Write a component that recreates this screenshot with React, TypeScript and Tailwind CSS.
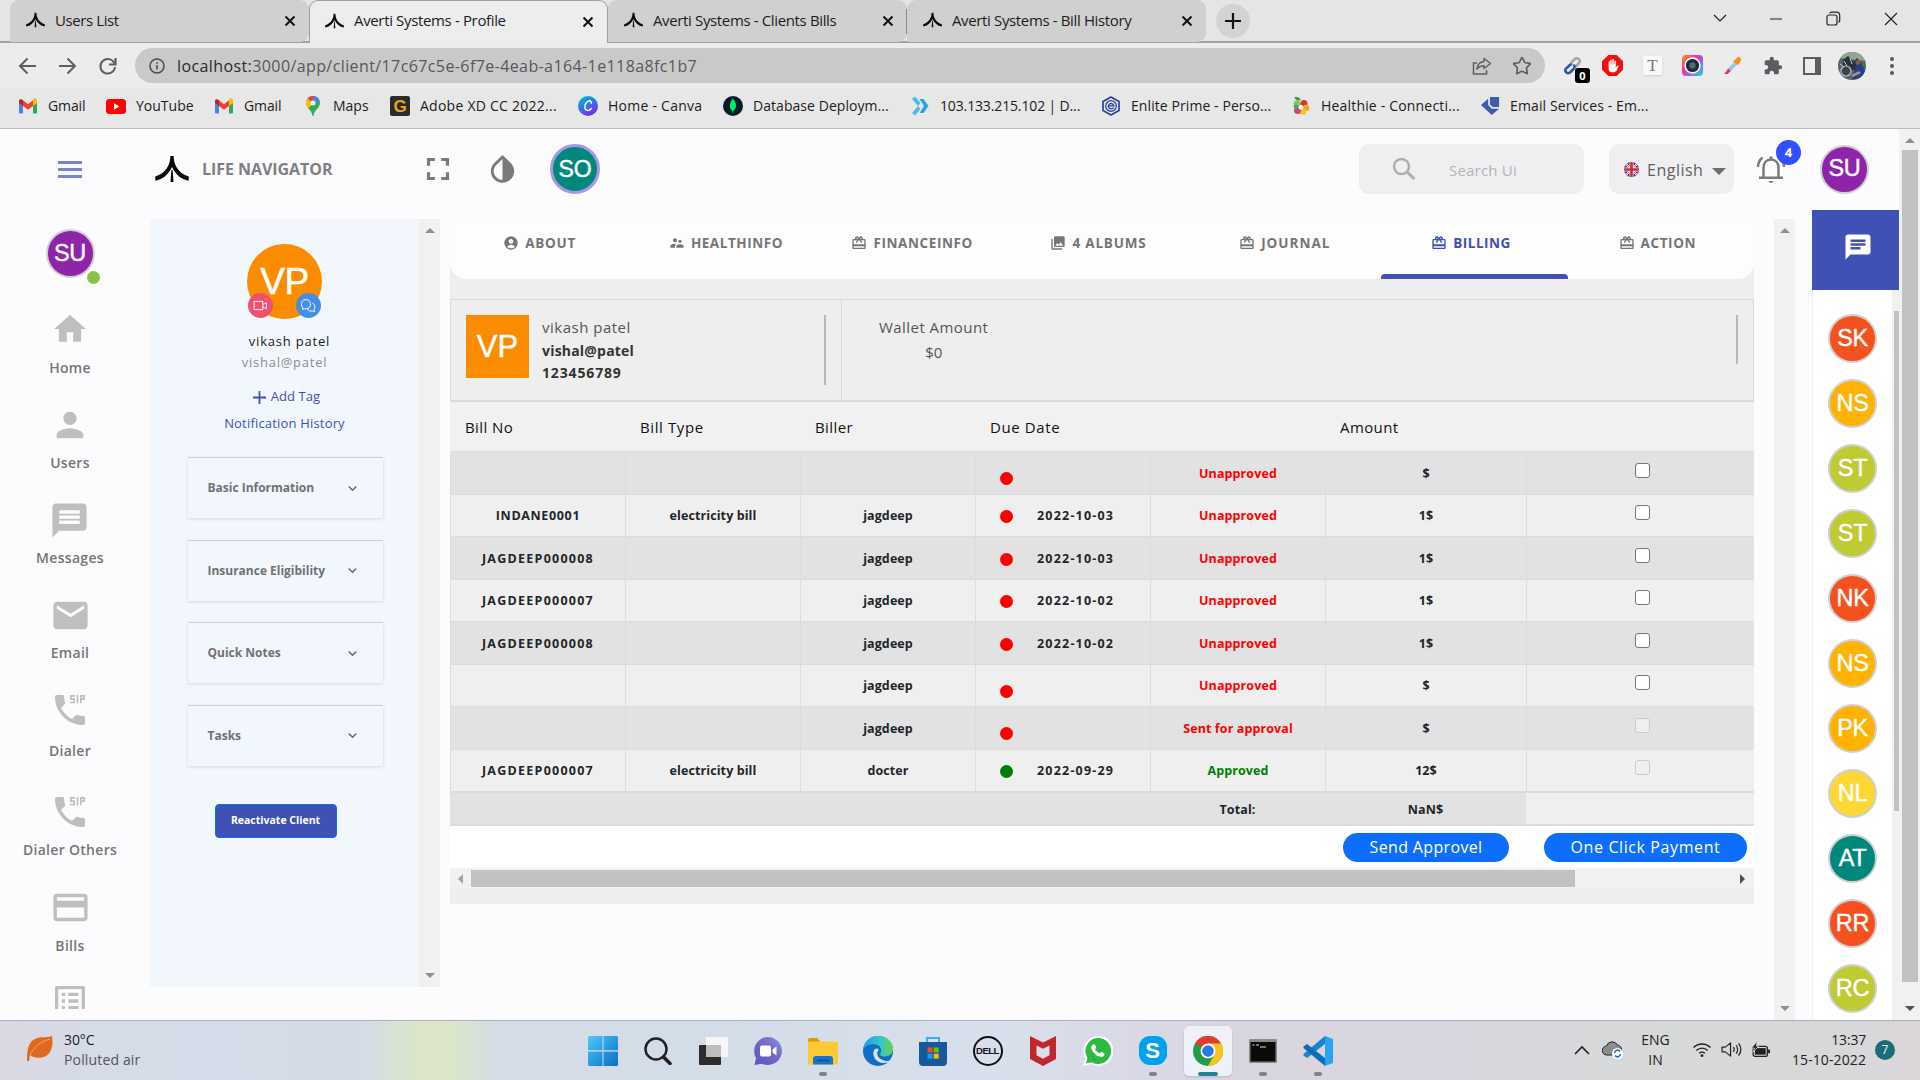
import React from "react";
import {
  MdHome,
  MdPerson,
  MdMessage,
  MdEmail,
  MdDialerSip,
  MdCreditCard,
  MdListAlt,
  MdFullscreen,
  MdInvertColors,
  MdAccountCircle,
  MdSupervisorAccount,
  MdCardGiftcard,
  MdPhotoLibrary,
  MdChat,
  MdExtension,
  MdExpandMore,
} from "react-icons/md";
import { Star } from "lucide-react";

const UI = "font-['Open_Sans',sans-serif]";

/* ---------- small drawings ---------- */

function AvertiMark({ className }: { className: string }) {
  return (
    <svg viewBox="0 0 34 26" className={className} fill="#0a0a0a">
      <path d="M15.4 0h3.2c.2 9 4.400 17 15.100 20.600v4.200C26 23.300 20.500 18.500 17 11 13.500 18.500 8 23.300.3 24.800v-4.200C11 17 15.200 9 15.400 0z" />
      <path d="M16.400 14h1.200l.9 12h-3z" />
    </svg>
  );
}

function Cross({ className }: { className: string }) {
  return (
    <svg viewBox="0 0 12 12" className={className} stroke="#111" strokeWidth="2" fill="none">
      <path d="M1.500 1.500l9 9M10.500 1.500l-9 9" />
    </svg>
  );
}

function GmailIcon() {
  return (
    <svg viewBox="0 0 20 16" className="h-4 w-5">
      <path d="M1 3v11.500c0 .6.500 1 1 1h3V7z" fill="#4285f4" />
      <path d="M19 3v11.500c0 .6-.5 1-1 1h-3V7z" fill="#34a853" />
      <path d="M15 2.300V8l4-3V2.500c0-1.900-2-2.800-3.300-1.700z" fill="#fbbc04" />
      <path d="M5 8V2.300l5 3.900 5-3.900V8l-5 3.800z" fill="#ea4335" />
      <path d="M1 2.500V5l4 3V2.300l-.7-.6C3 .6 1 1.300 1 2.500z" fill="#c5221f" />
    </svg>
  );
}

function YouTubeIcon() {
  return (
    <svg viewBox="0 0 20 15" className="h-[15px] w-5">
      <rect width="20" height="15" rx="3.500" fill="#f00" />
      <path d="M8 4.300v6.400l5.400-3.200z" fill="#fff" />
    </svg>
  );
}

function MapsIcon() {
  return (
    <svg viewBox="0 0 14 20" className="h-5 w-3.5">
      <path d="M7 0C3.100 0 0 3.100 0 7c0 5.200 5.700 6.500 6.400 12.400.1.800 1.100.8 1.200 0C8.300 13.500 14 12.200 14 7c0-3.900-3.100-7-7-7z" fill="#34a853" />
      <path d="M0 7c0 2.400 1 4 2.300 5.600L9 5 4.800 1.500 1.600 2.500A7 7 0 0 0 0 7z" fill="#fbbc04" />
      <path d="M1.600 2.500L5 5.400 9 .3A7 7 0 0 0 1.600 2.500z" fill="#ea4335" />
      <path d="M9 .3L5 5.200l4.200 3.600 4.300-4.400A7 7 0 0 0 9 .3z" fill="#4285f4" />
      <circle cx="7" cy="7" r="2.500" fill="#fff" />
    </svg>
  );
}

function CanvaIcon() {
  return (
    <svg viewBox="0 0 20 20" className="h-5 w-5">
      <defs>
        <linearGradient id="canva" x1="0" y1="0" x2=".6" y2="1">
          <stop offset="0" stopColor="#00c4cc" />
          <stop offset=".5" stopColor="#2a7be8" />
          <stop offset="1" stopColor="#7d2ae8" />
        </linearGradient>
      </defs>
      <circle cx="10" cy="10" r="10" fill="url(#canva)" />
      <path d="M13.300 7.200c.4-1.800-.9-2.700-2.500-2.200-2.600.8-4.300 4-4 6.700.3 2.900 3.800 4 6.600.8" fill="none" stroke="#fff" strokeWidth="1.500" strokeLinecap="round" />
    </svg>
  );
}

function MongoIcon() {
  return (
    <svg viewBox="0 0 20 20" className="h-5 w-5">
      <circle cx="10" cy="10" r="10" fill="#021e2b" />
      <path d="M10 2.500c4 4.500 4 9.500.3 12.500l-.1 2.500h-.5L9.500 15C6 12 6 7 10 2.500z" fill="#00ed64" />
    </svg>
  );
}

function ChevronsIcon() {
  return (
    <svg viewBox="0 0 18 20" className="h-5 w-[18px]">
      <path d="M1 3l3-2.500L9.500 7 7 10 1 3z" fill="#45bdee" />
      <path d="M1 17l3 2.500L9.500 13 7 10z" fill="#45bdee" />
      <path d="M8.500 3h4L17.500 10l-5 7h-4l4.500-7z" fill="#2aa2e6" />
    </svg>
  );
}

function EnliteIcon() {
  return (
    <svg viewBox="0 0 20 20" className="h-5 w-5" fill="none" stroke="#2d3e9f">
      <path d="M10 1l8 4.500v9L10 19l-8-4.500v-9z" strokeWidth="1.700" strokeLinejoin="round" />
      <circle cx="10" cy="10" r="5.300" strokeWidth="1.300" />
      <path d="M12.500 11.500a2.700 2.700 0 1 1 .3-1.700H8" strokeWidth="1.300" />
    </svg>
  );
}

function HealthieIcon() {
  return (
    <svg viewBox="0 0 18 20" className="h-5 w-[18px]">
      <path d="M9 4C7 0 3 1 2.500 1c.500 3 3 4.500 6.500 3z" fill="#3c9b3a" />
      <circle cx="5" cy="8" r="3.500" fill="#8cc63f" />
      <circle cx="12" cy="7.500" r="3.500" fill="#e5312b" />
      <circle cx="14" cy="12" r="3.300" fill="#f6a21c" />
      <circle cx="11" cy="15.500" r="3.300" fill="#f4c51d" />
      <circle cx="5.500" cy="14.500" r="3.500" fill="#e23e68" />
      <circle cx="4" cy="11" r="2.300" fill="#2fa98a" />
      <circle cx="9" cy="11.500" r="2.400" fill="#fff" />
    </svg>
  );
}

function EmailServiceIcon() {
  return (
    <svg viewBox="0 0 22 20" className="h-5 w-[22px]" fill="#3f5ba9">
      <path d="M11 0h10v11h-7l-3-3z" />
      <path d="M9 2v7l4 4h8l-8 7L1 9z" />
    </svg>
  );
}

function Flag() {
  return (
    <svg viewBox="0 0 15 15" className="h-[15px] w-[15px]">
      <defs>
        <clipPath id="flag">
          <circle cx="7.500" cy="7.500" r="7.500" />
        </clipPath>
      </defs>
      <g clipPath="url(#flag)">
        <rect width="15" height="15" fill="#29337a" />
        <path d="M0 0l15 15M15 0L0 15" stroke="#fff" strokeWidth="2.200" />
        <path d="M0 0l15 15M15 0L0 15" stroke="#d32f3f" strokeWidth=".8" />
        <path d="M7.500 0v15M0 7.500h15" stroke="#fff" strokeWidth="4" />
        <path d="M7.500 0v15M0 7.500h15" stroke="#d3253a" strokeWidth="2.600" />
      </g>
    </svg>
  );
}

function Tri({ dir, color = "#8f8f8f" }: { dir: "up" | "down" | "left" | "right"; color?: string }) {
  const d = {
    up: "M0 8L5 3l5 5z",
    down: "M0 2l5 5 5-5z",
    left: "M8 0L3 5l5 5z",
    right: "M2 0l5 5-5 5z",
  }[dir];
  return (
    <svg viewBox="0 0 10 10" className="h-2.5 w-2.5 shrink-0">
      <path d={d} fill={color} />
    </svg>
  );
}

/* ---------- browser chrome ---------- */

function Tab({ title, text, active, sep }: { title: string; text: string; active?: boolean; sep?: boolean }) {
  return (
    <div
      className={
        active
          ? "relative z-10 -mb-px flex h-[43px] w-[299px] shrink-0 items-center rounded-t-[9px] border border-b-0 border-[#9f9f9f] bg-[#ededed] pb-[3px] pl-[15px]"
          : "relative flex h-[42px] w-[299px] shrink-0 items-center rounded-t-[9px] rounded-br-[9px] bg-[#d0d0d0] pb-[2px] pl-4"
      }
    >
      <AvertiMark className="h-4 w-[19px]" />
      <span className={"ml-[10px] whitespace-nowrap text-[#1c1c1c] " + text}>{title}</span>
      <Cross className="absolute top-[15px] right-[13px] h-3 w-3" />
      {sep && <span className="absolute top-[9px] right-0 h-[25px] w-px bg-[#8a8a8a]" />}
    </div>
  );
}

function TabStrip() {
  return (
    <div className="flex h-[43px] items-start border-b-2 border-[#a2a2a2] bg-[#e5e5e5] pl-[10px] text-[15px]">
      <Tab title="Users List" text="tracking-[-0.4px]" />
      <Tab title="Averti Systems - Profile" text="tracking-[-0.35px]" active />
      <Tab title="Averti Systems - Clients Bills" text="tracking-[-0.36px]" sep />
      <Tab title="Averti Systems - Bill History" text="tracking-[-0.36px]" />
      <div className="mt-1 ml-[10px] flex h-[34px] w-[34px] items-center justify-center rounded-full bg-[#d3d3d3]">
        <svg viewBox="0 0 16 16" className="h-4 w-4" stroke="#111" strokeWidth="2.200">
          <path d="M8 0v16M0 8h16" />
        </svg>
      </div>
      <div className="mt-2 ml-auto flex items-center pr-[21px]">
        <svg viewBox="0 0 186 20" className="h-5 w-[186px]" fill="none" stroke="#222" strokeWidth="1.200">
          <path d="M1 7l6 6 6-6M57 11h12" />
          <rect x="114" y="7" width="10" height="10" rx="2" />
          <path d="M117 5.500c0-.8.700-1.300 1.500-1.300h5c2 0 3.200 1.200 3.200 3.200v5c0 1-.5 1.600-1.500 1.600" />
          <path d="M172 5l12 12M184 5l-12 12" />
        </svg>
      </div>
    </div>
  );
}

function Toolbar() {
  return (
    <div className="flex h-[45px] items-center bg-[#ececec]">
      <svg viewBox="0 0 120 20" className="h-5 w-[120px] shrink-0" fill="none" stroke="#5c5f63" strokeWidth="2">
        <path d="M36 10H20.500M27.500 2.500L20 10l7.500 7.500M59 10h15.500M67.500 2.500L75 10l-7.500 7.500" />
        <path d="M114.500 7.500A7.300 7.300 0 1 0 115 11" />
        <path d="M115.500 2v6.500H109" strokeWidth="2.200" />
      </svg>
      <div className="ml-[15px] flex h-[35px] w-[1410px] shrink-0 items-center rounded-full bg-[#c9c9c9] pr-[13px] pl-[14px]">
        <svg viewBox="0 0 16 16" className="h-4 w-4" fill="none" stroke="#4b4e52" strokeWidth="1.600">
          <circle cx="8" cy="8" r="7" />
          <path d="M8 7v4.500M8 4.200v1.600" />
        </svg>
        <span className="ml-[12px] text-[16px] tracking-[0.4px] whitespace-nowrap text-[#55585c]">
          <span className="text-[#2a2a2a]">localhost:</span>3000/app/client/17c67c5e-6f7e-4eab-a164-1e118a8fc1b7
        </span>
        <svg viewBox="0 0 20 18" className="ml-auto h-[18px] w-5" fill="none" stroke="#5c5f63" strokeWidth="1.500">
          <path d="M5 6H1.500v11h13v-4" />
          <path d="M12 1.500l6.500 5L12 11.500V8.700c-3.300 0-5.300 1-7 3.500.4-4.200 2.800-7.200 7-7.700z" strokeLinejoin="round" />
        </svg>
        <Star className="ml-[20px] h-5 w-5 text-[#5c5f63]" strokeWidth={2} />
      </div>
      <div className="ml-[18px] flex shrink-0 items-center">
        <div className="relative h-5 w-5">
          <svg viewBox="0 0 20 20" className="h-5 w-5" fill="none" strokeWidth="2.600" strokeLinecap="round">
            <path d="M8.500 8.500c-.5-1.500.2-2.500 1-3.200l2-2c3-2.700 7 1 4.200 4L13 10.500" stroke="#a6a8ab" />
            <path d="M7.500 8.500L3 12.500c-2 3 1.400 6 4 4l3.500-3.500c1.500-1.500 1.200-2.700.8-3.500" stroke="#2d55a5" />
          </svg>
          <span className="absolute top-[12px] left-[12px] flex h-[15px] w-[15px] items-center justify-center rounded-[3px] bg-black text-[11px] leading-none font-bold text-white">0</span>
        </div>
        <svg viewBox="0 0 20 20" className="ml-[19px] h-[21px] w-[21px]">
          <path d="M6 0h8l6 6v8l-6 6H6l-6-6V6z" fill="#ee1111" />
          <path d="M6.300 8v4.500c0 2.700 1.500 4 4 4s3.500-1 4.300-3l1.200-3.200c-1.200-.8-1.800.2-2.600 1.500V5.500h-1.400V9h-.6V3.700H9.800V9h-.6V4.500H7.800V9.500h-.4V6.300H6.300z" fill="#fff" />
        </svg>
        <div className="ml-[20px] flex h-[19px] w-[19px] items-center justify-center bg-[#f8f8f8] font-['Liberation_Serif',serif] text-[17px] leading-none text-[#777] shadow-sm">T</div>
        <svg viewBox="0 0 20 20" className="ml-[20px] h-[21px] w-[21px]">
          <defs>
            <linearGradient id="cam" x1="0" y1="0" x2="1" y2="1">
              <stop offset="0" stopColor="#ff9a1f" />
              <stop offset=".35" stopColor="#ff2f92" />
              <stop offset=".65" stopColor="#8a6cf7" />
              <stop offset="1" stopColor="#19e0c0" />
            </linearGradient>
          </defs>
          <rect width="20" height="20" rx="3.500" fill="url(#cam)" />
          <circle cx="10" cy="10" r="7.800" fill="#fff" />
          <circle cx="10" cy="10" r="6.300" fill="#222b33" />
          <circle cx="10" cy="10" r="3" fill="#4a6a80" />
        </svg>
        <svg viewBox="0 0 20 20" className="ml-[21px] h-[18px] w-[18px]">
          <path d="M11 6l3 3-8 8H3v-3z" fill="#8ec9f2" />
          <path d="M5 13l2.500 2.500L4 19H0z" fill="#ee2a6b" />
          <path d="M10 5l5-4.500c2-1.500 5 1 3.800 3.500L15 9.500z" fill="#ff8c1a" />
        </svg>
        <MdExtension className="ml-[21px] h-5 w-5 text-[#5a5d61]" />
        <div className="ml-[20px] h-[18px] w-[18px] border-2 border-r-[6px] border-[#5a5d61]" />
        <svg viewBox="0 0 28 28" className="ml-[17px] h-7 w-7">
          <defs>
            <clipPath id="profile">
              <circle cx="14" cy="14" r="14" />
            </clipPath>
          </defs>
          <g clipPath="url(#profile)">
            <rect width="28" height="28" fill="#56646a" />
            <path d="M0 0h28v9L0 6z" fill="#8fa596" />
            <path d="M5 8l5-4 6 6 3-4 5 6-3 6H5z" fill="#2a3238" />
            <circle cx="8" cy="19" r="5" fill="#39434a" stroke="#b6c2c8" strokeWidth="1.200" />
            <path d="M6 9l3 5M12 6l2 6M2 12l4 3" stroke="#c3cdd2" strokeWidth="1" />
            <path d="M18 13l7 1 3 9-6 5-8-1z" fill="#1d4488" />
            <circle cx="20" cy="10.500" r="2.500" fill="#8a5a48" />
            <path d="M13 23l8-4 2 2-8 4z" fill="#c08666" />
          </g>
        </svg>
        <svg viewBox="0 0 4 18" className="ml-[24px] h-[18px] w-1" fill="#55585c">
          <circle cx="2" cy="2" r="2" />
          <circle cx="2" cy="9" r="2" />
          <circle cx="2" cy="16" r="2" />
        </svg>
      </div>
    </div>
  );
}

const bookmarks: { icon: React.ReactNode; label: string; slot: string; text: string }[] = [
  { icon: <GmailIcon />, label: "Gmail", slot: "w-[88px]", text: "tracking-[-0.1px]" },
  { icon: <YouTubeIcon />, label: "YouTube", slot: "w-[108px]", text: "tracking-[0px]" },
  { icon: <GmailIcon />, label: "Gmail", slot: "w-[89px]", text: "tracking-[-0.1px]" },
  { icon: <MapsIcon />, label: "Maps", slot: "w-[87px]", text: "tracking-[0px]" },
  {
    icon: (
      <span className="flex h-5 w-5 items-center justify-center rounded-[2px] bg-[#2b2b2b] font-['Liberation_Sans',sans-serif] text-[17px] leading-none font-bold text-[#e8a817]">G</span>
    ),
    label: "Adobe XD CC 2022...",
    slot: "w-[188px]",
    text: "tracking-[0.25px]",
  },
  { icon: <CanvaIcon />, label: "Home - Canva", slot: "w-[145px]", text: "tracking-[0.25px]" },
  { icon: <MongoIcon />, label: "Database Deploym...", slot: "w-[187px]", text: "tracking-[0.05px]" },
  { icon: <ChevronsIcon />, label: "103.133.215.102 | D...", slot: "w-[191px]", text: "tracking-[-0.14px]" },
  { icon: <EnliteIcon />, label: "Enlite Prime - Perso...", slot: "w-[190px]", text: "tracking-[0.08px]" },
  { icon: <HealthieIcon />, label: "Healthie - Connecti...", slot: "w-[189px]", text: "tracking-[0.18px]" },
  { icon: <EmailServiceIcon />, label: "Email Services - Em...", slot: "w-[190px]", text: "tracking-[0.12px]" },
];

function Bookmarks() {
  return (
    <div className="flex h-[41px] items-center border-b border-[#bcbcbc] bg-[#e7e7e7] pb-[4px] pl-[18px] text-[14px] text-[#1c1c1c]">
      {bookmarks.map((b, i) => (
        <div key={i} className={"flex shrink-0 items-center " + b.slot}>
          <span className="flex w-[30px] shrink-0 items-center">
            <span className="flex w-5 justify-center">{b.icon}</span>
          </span>
          <span className={"pb-[2px] whitespace-nowrap " + b.text}>{b.label}</span>
        </div>
      ))}
    </div>
  );
}

/* ---------- application ---------- */

function Avatar({ text, color, ring = "border-[#cfcfd4]" }: { text: string; color: string; ring?: string }) {
  return (
    <span
      className={
        "flex h-[49px] w-[49px] shrink-0 items-center justify-center rounded-full border-2 font-['Liberation_Sans',sans-serif] text-[23.500px] leading-none tracking-[-0.3px] text-white [-webkit-text-stroke:0.4px_white] " +
        color +
        " " +
        ring
      }
    >
      {text}
    </span>
  );
}

function Header() {
  return (
    <div className="flex h-[80px] shrink-0 items-center pl-[58px]">
      <div className="flex w-6 shrink-0 flex-col gap-[4px]">
        <span className="h-[3px] bg-[#7b85c6]" />
        <span className="h-[3px] bg-[#7b85c6]" />
        <span className="h-[3px] bg-[#7b85c6]" />
      </div>
      <AvertiMark className="ml-[73px] h-[26px] w-[34px] shrink-0" />
      <span className="ml-[13px] w-[217px] shrink-0 text-[16px] font-bold tracking-[-0.05px] whitespace-nowrap text-[#808080]">LIFE NAVIGATOR</span>
      <MdFullscreen className="h-[38px] w-[38px] shrink-0 text-[#7a7a7a]" />
      <MdInvertColors className="ml-[28px] h-[35px] w-[35px] shrink-0 text-[#7a7a7a]" />
      <span className="ml-[30px] flex h-[50px] w-[50px] shrink-0 items-center justify-center rounded-full border-[3px] border-[#a398ea] bg-[#00897b] font-['Liberation_Sans',sans-serif] text-[23px] leading-none text-white [-webkit-text-stroke:0.4px_white]">SO</span>
      <div className="ml-[759px] flex h-[50px] w-[225px] shrink-0 items-center rounded-[10px] bg-[#efeff1] pl-[33px]">
        <svg viewBox="0 0 24 24" className="h-6 w-6" fill="none" stroke="#adadad" strokeWidth="2.400">
          <circle cx="9.500" cy="9.500" r="7.500" />
          <path d="M15 15l7.500 7" strokeWidth="3" />
        </svg>
        <span className="ml-[33px] pt-[2px] text-[15px] tracking-[0.2px] whitespace-nowrap text-[#b4b4b4]">Search Ui</span>
      </div>
      <div className="ml-[25px] flex h-[50px] w-[125px] shrink-0 items-center rounded-[10px] bg-[#efeff1] pl-[15px]">
        <Flag />
        <span className="ml-[8px] w-[65px] pt-[2px] text-[16px] tracking-[0.5px] whitespace-nowrap text-[#5f5f5f]">English</span>
        <svg viewBox="0 0 14 8" className="mt-[5px] h-2 w-[14px]">
          <path d="M0 0h14L7 7z" fill="#6e6e6e" />
        </svg>
      </div>
      <div className="relative ml-[22px] h-[30px] w-[30px] shrink-0">
        <svg viewBox="0 0 30 30" className="h-[30px] w-[30px]" fill="none" stroke="#7b7b7b" strokeWidth="2.500">
          <path d="M7.500 23.500V14c0-5 3-8.500 7.500-8.500s7.500 3.500 7.500 8.500v9.500" />
          <path d="M3 23.800h24M2 13c0-4 1.500-7 4.500-9.500M28 13c0-4-1.500-7-4.500-9.500" />
          <path d="M12.500 27h5c-.5 2.500-4.500 2.500-5 0zM13.500 2.500h3v3h-3z" fill="#7b7b7b" stroke="none" />
        </svg>
        <span className="absolute top-[-14px] left-[20px] flex h-[25px] w-[25px] items-center justify-center rounded-full bg-[#304ffe] text-[13px] font-bold text-white">4</span>
      </div>
      <span className="ml-[34px] flex">
        <Avatar text="SU" color="bg-[#8e24aa]" />
      </span>
    </div>
  );
}

const navItems = [
  { Icon: MdHome, label: "Home", box: "h-[95px]", size: "h-[38px] w-[38px]", gap: "mt-[10px]" },
  { Icon: MdPerson, label: "Users", box: "h-[95px]", size: "h-[40px] w-[40px]", gap: "mt-[8px]" },
  { Icon: MdMessage, label: "Messages", box: "h-[95px]", size: "h-[41px] w-[41px]", gap: "mt-[7px]" },
  { Icon: MdEmail, label: "Email", box: "h-[95px]", size: "h-[41px] w-[41px]", gap: "mt-[7px]" },
  { Icon: MdDialerSip, label: "Dialer", box: "h-[102px]", size: "h-[40px] w-[40px]", gap: "mt-[11px]" },
  { Icon: MdDialerSip, label: "Dialer Others", box: "h-[95px]", size: "h-[40px] w-[40px]", gap: "mt-[8px]" },
  { Icon: MdCreditCard, label: "Bills", box: "h-[94px]", size: "h-[41px] w-[41px]", gap: "mt-[8px]" },
];

function LeftNav() {
  return (
    <nav className="flex h-[802px] w-[150px] shrink-0 flex-col items-center overflow-hidden pr-[10px]">
      <div className="relative mt-[20px] shrink-0">
        <Avatar text="SU" color="bg-[#8e24aa]" />
        <span className="absolute top-[42px] left-[41px] h-[13px] w-[13px] rounded-full bg-[#8bc34a]" />
      </div>
      <div className="mt-[32px] flex flex-col items-center">
        {navItems.map(({ Icon, label, box, size, gap }) => (
          <div key={label} className={"flex shrink-0 flex-col items-center " + box}>
            <Icon className={"shrink-0 text-[#bfbfbf] " + size} />
            <span className={"text-[14px] leading-5 font-semibold tracking-[0.3px] whitespace-nowrap text-[#757575] " + gap}>{label}</span>
          </div>
        ))}
        <div className="h-[28px] w-10 overflow-hidden">
          <MdListAlt className="h-10 w-10 text-[#bfbfbf]" />
        </div>
      </div>
    </nav>
  );
}

const panels = ["Basic Information", "Insurance Eligibility", "Quick Notes", "Tasks"];

function ProfilePanel() {
  return (
    <aside className="mt-[10px] flex h-[768px] w-[290px] shrink-0 bg-[#f2f7fe]">
      <div className="flex w-[269px] flex-col items-center">
        <div className="relative mt-[25px] flex h-[75px] w-[75px] items-center justify-center rounded-full bg-[#fb8c00] font-['Liberation_Sans',sans-serif] text-[37px] tracking-[-0.5px] text-white [-webkit-text-stroke:0.5px_white]">
          VP
          <span className="absolute top-[49px] left-px flex h-[25px] w-[25px] items-center justify-center rounded-full bg-[#ee5170]">
            <svg viewBox="0 0 16 12" className="h-[11px] w-[15px]" fill="none" stroke="#fff" strokeWidth="1">
              <rect x="1" y="1.500" width="9.500" height="9" />
              <path d="M10.500 5l4-2v6.500l-4-2" />
            </svg>
          </span>
          <span className="absolute top-[49px] left-[49px] flex h-[25px] w-[25px] items-center justify-center rounded-full bg-[#448fe4]">
            <svg viewBox="0 0 16 16" className="h-[15px] w-[15px]" fill="none" stroke="#fff" strokeWidth="1">
              <path d="M2 10.500L1.500 12 4 11.500A5 5 0 1 0 2 10.500z" />
              <path d="M12 5.500c3 1 3.500 4.500 2 6.500l.5 2.500-2.500-.8c-2.500.8-4.500-.3-5-2" />
            </svg>
          </span>
        </div>
        <span className="mt-[12px] ml-[10px] text-[13px] leading-5 tracking-[0.8px] text-[#1b1b1b]">vikash patel</span>
        <span className="mt-px text-[13px] leading-5 tracking-[0.75px] text-[#8d8d8d]">vishal@patel</span>
        <span className="mt-[14px] ml-[4px] flex items-center gap-[5px] text-[13px] leading-5 text-[#3f51b5]">
          <svg viewBox="0 0 13 13" className="mt-[2px] h-[13px] w-[13px]" stroke="#3f51b5" strokeWidth="1.800">
            <path d="M6.500 0v13M0 6.500h13" />
          </svg>
          <span className="tracking-[0.05px]">Add Tag</span>
        </span>
        <span className="mt-[7px] text-[13px] leading-5 tracking-[0.18px] text-[#3f51b5]">Notification History</span>
        <div className="mt-[24px] ml-px flex flex-col gap-[21.6px]">
          {panels.map((p) => (
            <div key={p} className="flex h-[61px] w-[195px] items-center justify-between border-t border-[#cdd2da] pr-[22px] pl-[20px] shadow-[0_1px_3px_rgba(0,0,0,0.13)]">
              <span className="text-[12px] font-bold tracking-[-0.01px] text-[#717171]">{p}</span>
              <MdExpandMore className="h-[17px] w-[17px] text-[#666]" />
            </div>
          ))}
        </div>
        <button className="mt-[38px] mr-[18px] h-[34px] w-[122px] rounded-[4px] border border-[#0d6efd] bg-[#3f51b5] text-[10.500px] font-bold tracking-[0px] whitespace-nowrap text-white">
          Reactivate Client
        </button>
      </div>
      <div className="flex w-[21px] flex-col items-center justify-between bg-[#f1f1f1] py-[6px]">
        <Tri dir="up" />
        <Tri dir="down" />
      </div>
    </aside>
  );
}

const tabs = [
  { Icon: MdAccountCircle, label: "ABOUT", text: "tracking-[0.7px]" },
  { Icon: MdSupervisorAccount, label: "HEALTHINFO", text: "tracking-[0.55px]" },
  { Icon: MdCardGiftcard, label: "FINANCEINFO", text: "tracking-[0.6px]" },
  { Icon: MdPhotoLibrary, label: "4 ALBUMS", text: "tracking-[0.8px]" },
  { Icon: MdCardGiftcard, label: "JOURNAL", text: "tracking-[1px]" },
  { Icon: MdCardGiftcard, label: "BILLING", text: "tracking-[0.5px]", active: true },
  { Icon: MdCardGiftcard, label: "ACTION", text: "tracking-[0.6px]" },
];

const RED = "text-[#f00]";
const GREEN = "text-[#008000]";
const WIDE = "tracking-[1.250px]";

const rows = [
  { no: "", noText: "", type: "", biller: "", date: "", status: "Unapproved", color: RED, amount: "$", off: false },
  { no: "INDANE0001", noText: "tracking-[0.65px]", type: "electricity bill", biller: "jagdeep", date: "2022-10-03", status: "Unapproved", color: RED, amount: "1$", off: false },
  { no: "JAGDEEP000008", noText: WIDE, type: "", biller: "jagdeep", date: "2022-10-03", status: "Unapproved", color: RED, amount: "1$", off: false },
  { no: "JAGDEEP000007", noText: WIDE, type: "", biller: "jagdeep", date: "2022-10-02", status: "Unapproved", color: RED, amount: "1$", off: false },
  { no: "JAGDEEP000008", noText: WIDE, type: "", biller: "jagdeep", date: "2022-10-02", status: "Unapproved", color: RED, amount: "1$", off: false },
  { no: "", noText: "", type: "", biller: "jagdeep", date: "", status: "Unapproved", color: RED, amount: "$", off: false },
  { no: "", noText: "", type: "", biller: "jagdeep", date: "", status: "Sent for approval", color: RED, amount: "$", off: true },
  { no: "JAGDEEP000007", noText: WIDE, type: "electricity bill", biller: "docter", date: "2022-09-29", status: "Approved", color: GREEN, amount: "12$", off: true },
];

const cols = "grid grid-cols-[175px_175px_175px_175px_175px_201px_228px]";
const box = "flex items-center border-l border-[#dcdce4] whitespace-nowrap";
const cell = box + " justify-center pt-[3px]";

function BillTable() {
  return (
    <div className="text-[12.500px] font-bold tracking-[0.1px] text-[#212529]">
      <div className={cols + " h-[49px] items-center bg-[#f1f1f1] pt-px text-[15px] font-medium tracking-[0.4px] text-[#111]"}>
        <span className="pl-[15px]">Bill No</span>
        <span className="pl-[15px] tracking-[0.6px]">Bill Type</span>
        <span className="pl-[15px]">Biller</span>
        <span className="pl-[15px] tracking-[0.6px]">Due Date</span>
        <span />
        <span className="pl-[15px]">Amount</span>
        <span />
      </div>
      {rows.map((r, i) => (
        <div key={i} className={cols + " h-[42.500px] border-t border-[#dcdcdf] " + (i % 2 ? "bg-[#efefef]" : "bg-[#e2e2e2]")}>
          <span className={cell + " " + r.noText}>{r.no}</span>
          <span className={cell}>{r.type}</span>
          <span className={cell}>{r.biller}</span>
          <span className={box + " pt-[3px] pl-[24px]"}>
            <span
              className={
                "h-[13px] w-[13px] shrink-0 rounded-full " +
                (r.color === GREEN ? "bg-[#008000]" : "bg-[#f00]") +
                (r.date ? "" : " mt-[9px]")
              }
            />
            <span className="ml-[24px] tracking-[1.200px]">{r.date}</span>
          </span>
          <span className={cell + " " + r.color}>{r.status}</span>
          <span className={cell}>{r.amount}</span>
          <span className={box + " justify-center pb-[5px] pl-[4px]"}>
            <span
              className={
                r.off
                  ? "h-[15px] w-[15px] rounded-[3px] border border-[#cbcbcb] bg-[#efefef]"
                  : "h-[15px] w-[15px] rounded-[3px] border border-[#767676] bg-white"
              }
            />
          </span>
        </div>
      ))}
      <div className="grid h-[35px] grid-cols-[700px_175px_201px_228px] border-y-2 border-[#dcdcdf] bg-[#e2e2e2]">
        <span />
        <span className="flex items-center justify-center pt-[3px]">Total:</span>
        <span className="flex items-center justify-center pt-[3px]">NaN$</span>
        <span className="bg-[#efefef]" />
      </div>
      <div className="flex h-[42px] items-center justify-end bg-white pr-[7px] text-[16px] font-normal text-white">
        <button className="h-[29px] w-[166px] rounded-full bg-[#0d6efd] tracking-[0.35px] whitespace-nowrap">Send Approvel</button>
        <button className="ml-[35px] h-[29px] w-[203px] rounded-full bg-[#0d6efd] tracking-[0.6px] whitespace-nowrap">One Click Payment</button>
      </div>
    </div>
  );
}

function Main() {
  return (
    <main className="mt-[10px] ml-[10px] flex w-[1304px] shrink-0 flex-col">
      <div className="bg-[linear-gradient(to_bottom,transparent_50%,#eeeeee_50%)]">
        <div className="flex h-[60px] rounded-b-[16px] bg-[#fdfdfd]">
          {tabs.map(({ Icon, label, text, active }) => (
            <div key={label} className={"flex flex-1 flex-col items-center " + (active ? "text-[#3f51b5]" : "text-[#757575]")}>
              <div className="mt-[14px] flex h-5 items-center gap-[6px] pr-[7px] text-[13.500px] font-bold">
                <Icon className="h-4 w-4" />
                <span className={"whitespace-nowrap " + text}>{label}</span>
              </div>
              {active && <span className="mt-[21px] h-[5px] w-full rounded-t-[4px] bg-[#3f51b5]" />}
            </div>
          ))}
        </div>
      </div>
      <div className="bg-[#eeeeee] pt-[20px] pb-[15px]">
        <div className="flex h-[103px] border border-b-2 border-[#dadadc]">
          <div className="flex w-[391px] border-r border-[#dadadc] pt-[15px] pl-[15px]">
            <div className="flex h-[63px] w-[63px] items-center justify-center bg-[#fb8c00] pt-[2px] font-['Liberation_Sans',sans-serif] text-[31px] text-white [-webkit-text-stroke:0.4px_white]">VP</div>
            <div className="ml-[13px] flex w-[282px] flex-col text-[14px] leading-[22px] font-bold text-[#333]">
              <span className="mt-px text-[15px] font-normal tracking-[0.5px] text-[#555]">vikash patel</span>
              <span className="mt-[2px] tracking-[0.2px]">vishal@patel</span>
              <span className="tracking-[0.85px]">123456789</span>
            </div>
            <span className="h-[70px] w-[2px] bg-[#b8b8b8]" />
          </div>
          <div className="flex flex-1 justify-between pt-[15px] pr-[15px] pl-[37px]">
            <div className="flex flex-col items-center text-[15px] leading-6 text-[#555]">
              <span className="tracking-[0.45px]">Wallet Amount</span>
              <span className="mt-px">$0</span>
            </div>
            <span className="h-[49px] w-[2px] bg-[#b8b8b8]" />
          </div>
        </div>
        <BillTable />
        <div className="flex h-[21px] items-center bg-[#f1f1f1] pr-[6px] pl-[5px]">
          <Tri dir="left" color="#a3a3a3" />
          <div className="ml-[6px] h-[17px] w-[1104px] bg-[#c1c1c1]" />
          <span className="ml-auto flex">
            <Tri dir="right" color="#505050" />
          </span>
        </div>
      </div>
    </main>
  );
}

const contacts = [
  { t: "SK", c: "bg-[#f4511e]" },
  { t: "NS", c: "bg-[#ffb300]" },
  { t: "ST", c: "bg-[#c0ca33]" },
  { t: "ST", c: "bg-[#c0ca33]" },
  { t: "NK", c: "bg-[#f4511e]" },
  { t: "NS", c: "bg-[#ffb300]" },
  { t: "PK", c: "bg-[#ffb300]" },
  { t: "NL", c: "bg-[#fdd835]" },
  { t: "AT", c: "bg-[#00897b]" },
  { t: "RR", c: "bg-[#f4511e]" },
  { t: "RC", c: "bg-[#c0ca33]" },
];

function RightRail() {
  return (
    <div className="mt-px flex h-[810px] w-[87px] shrink-0 flex-col bg-white">
      <div className="flex h-[80px] items-center justify-center bg-[#3f51b5] pb-[6px] pl-[4px]">
        <MdChat className="h-[30px] w-[30px] text-white" />
      </div>
      <div className="flex h-[730px]">
        <div className="flex w-[80px] flex-col items-center gap-4 overflow-hidden border-l border-[#ececf0] pt-[24px]">
          {contacts.map((p, i) => (
            <Avatar key={i} text={p.t} color={p.c} />
          ))}
        </div>
        <div className="flex w-[7px] justify-end bg-[#f1f1f1] pt-[21px]">
          <div className="h-[500px] w-[5px] bg-[#c1c1c1]" />
        </div>
      </div>
    </div>
  );
}

/* ---------- taskbar ---------- */

const apps: { icon: React.ReactNode; dot?: boolean; active?: boolean }[] = [
  {
    icon: (
      <svg viewBox="0 0 30 30" className="h-[30px] w-[30px]">
        <defs>
          <linearGradient id="win" x1="0" y1="0" x2="1" y2="1">
            <stop offset="0" stopColor="#4cc9f8" />
            <stop offset="1" stopColor="#0a6cc9" />
          </linearGradient>
        </defs>
        <path d="M1 0h13.500v14.300H0V1zM15.500 0H29l1 1v13.300H15.500zM0 15.500h14.500V30H1l-1-1zM15.500 15.500H30V29l-1 1H15.500z" fill="url(#win)" />
      </svg>
    ),
  },
  {
    icon: (
      <svg viewBox="0 0 28 28" className="h-7 w-7" fill="none" stroke="#222">
        <circle cx="12" cy="12" r="10.500" strokeWidth="2.500" />
        <path d="M19.500 20l6.500 6.500" strokeWidth="3.500" strokeLinecap="round" />
      </svg>
    ),
  },
  {
    icon: (
      <svg viewBox="0 0 30 30" className="h-[30px] w-[30px]">
        <rect x="1" y="9" width="22" height="20" rx="1" fill="#2c2c2c" />
        <rect x="8" y="1" width="22" height="20" rx="1" fill="#f6f6f6" />
        <rect x="8" y="9" width="15" height="12" fill="#bdbdbd" />
      </svg>
    ),
  },
  {
    icon: (
      <svg viewBox="0 0 30 30" className="h-[30px] w-[30px]">
        <defs>
          <linearGradient id="chat" x1="0" y1="1" x2="1" y2="0">
            <stop offset="0" stopColor="#5557c4" />
            <stop offset=".6" stopColor="#7a68c4" />
            <stop offset="1" stopColor="#7c9bf0" />
          </linearGradient>
        </defs>
        <path d="M15 1a14 14 0 1 1-6 26.700L1.500 29 3 22A14 14 0 0 1 15 1z" fill="url(#chat)" />
        <rect x="7" y="9.500" width="11" height="11" rx="2" fill="#fff" />
        <path d="M19.500 13.500l4-3v9l-4-3z" fill="#fff" />
      </svg>
    ),
  },
  {
    icon: (
      <svg viewBox="0 0 32 28" className="h-7 w-8">
        <path d="M1 3c0-1.500.8-2 2-2h7l3 3v6H1z" fill="#d99a06" />
        <path d="M1 6c0-1 .5-1.500 1.500-1.500h27c1 0 1.500.5 1.500 1.500v20c0 1-.5 1.500-1.500 1.500h-27C1.500 27.500 1 27 1 26z" fill="#fcc932" />
        <path d="M6 27.500V22c0-2 1-3 3-3h14c2 0 3 1 3 3v5.500z" fill="#1474c9" />
        <path d="M10 23.500h12" stroke="#0b4a8c" strokeWidth="1.500" />
      </svg>
    ),
    dot: true,
  },
  {
    icon: (
      <svg viewBox="0 0 30 30" className="h-[30px] w-[30px]">
        <defs>
          <linearGradient id="edge" x1="0" y1="0" x2="1" y2="0">
            <stop offset="0" stopColor="#1b9de2" />
            <stop offset=".6" stopColor="#36c6c9" />
            <stop offset="1" stopColor="#6bd14a" />
          </linearGradient>
        </defs>
        <circle cx="15" cy="15" r="15" fill="#0f6fc5" />
        <path d="M0 14C1 5 8 0 15 0c9 0 15 6 15 12.500 0 5-4 8-8 8-3 0-5.500-1-5-2.500 2-2 2-8-4-9.500C8 7.500 2 9 0 14z" fill="url(#edge)" />
        <path d="M12 13c-3 3-2 10 4 13 4 2 9 1 12-2-3 1.500-6 1-8.500 0-4-1.800-6-5-5-8 .3-1 .8-1.500 1.500-2-1-1.500-2.500-2-4-1z" fill="#d8e2ee" />
      </svg>
    ),
  },
  {
    icon: (
      <svg viewBox="0 0 30 30" className="h-[30px] w-[30px]">
        <path d="M9 7V2h12v5" fill="none" stroke="#27b6f2" strokeWidth="2" />
        <path d="M1 6h28v20c0 2.500-1.500 4-4 4H5c-2.500 0-4-1.500-4-4z" fill="#17579c" />
        <path d="M9.500 11.500h5v5h-5z" fill="#f25022" />
        <path d="M15.700 11.500h5v5h-5z" fill="#7fba00" />
        <path d="M9.500 17.700h5v5h-5z" fill="#00a4ef" />
        <path d="M15.700 17.700h5v5h-5z" fill="#ffb900" />
      </svg>
    ),
  },
  {
    icon: (
      <span className="flex h-[30px] w-[30px] items-center justify-center rounded-full border-2 border-[#111] font-['Liberation_Sans',sans-serif] text-[9.500px] leading-none font-bold tracking-[-0.5px] text-[#111]">DELL</span>
    ),
  },
  {
    icon: (
      <svg viewBox="0 0 28 30" className="h-[30px] w-7">
        <path d="M1 0l13 6.500L27 0v23l-13 7-13-7z" fill="#c0282d" />
        <path d="M7.500 9.500l6.500 3.300 6.500-3.300v9.800L14 22.800l-6.500-3.500z" fill="#d9deea" />
      </svg>
    ),
  },
  {
    icon: (
      <svg viewBox="0 0 30 30" className="h-[30px] w-[30px]">
        <path d="M15 0a15 15 0 1 1-7 28L0 30l2.200-7.500A15 15 0 0 1 15 0z" fill="#fff" />
        <path d="M15 2a13 13 0 1 1-6.500 24.200L3 27.500 4.500 22A13 13 0 0 1 15 2z" fill="#2fb943" />
        <path d="M10 8.500c1-.6 1.800-.3 2.200.7l.9 2c.2.700-1 1.600-1 2 .8 1.700 2.500 3.200 4.500 4 .5 0 1.300-1.500 2-1.300l2.600 1.300c.9.600-.2 3.300-2.200 3.600-4.300.8-10.600-5-10.800-9.500 0-1.200.8-2.300 1.800-2.800z" fill="#fff" />
      </svg>
    ),
  },
  {
    icon: (
      <span className="relative flex h-[29px] w-7 items-center justify-center rounded-[11px] bg-[#00a2ed] font-['Liberation_Sans',sans-serif] text-[22px] leading-none font-bold text-white">S</span>
    ),
    dot: true,
  },
  {
    icon: (
      <svg viewBox="0 0 30 30" className="h-[30px] w-[30px]">
        <circle cx="15" cy="15" r="15" fill="#1e9e49" />
        <path d="M15 15L2 7.500A15 15 0 0 1 28 7.500z" fill="#e33b2e" />
        <path d="M15 7.500h13A15 15 0 0 1 15 30l6.500-11.500z" fill="#fcc31e" />
        <circle cx="15" cy="15" r="7.500" fill="#fff" />
        <circle cx="15" cy="15" r="5.800" fill="#2f77e8" />
      </svg>
    ),
    active: true,
  },
  {
    icon: (
      <svg viewBox="0 0 28 24" className="h-6 w-7">
        <rect width="28" height="24" rx="1" fill="#8b8b8b" />
        <rect x="1.500" y="3" width="25" height="19.500" fill="#0b0b0b" />
        <path d="M3.500 6h2M7 6h3M11 8h6" stroke="#ddd" strokeWidth="1.200" />
      </svg>
    ),
    dot: true,
  },
  {
    icon: (
      <svg viewBox="0 0 30 30" className="h-[30px] w-[30px]">
        <path d="M22 0l8 3v24l-8 3z" fill="#2aa3ee" />
        <path d="M22 0v8L4 22l-3.500-2.500V18z" fill="#1684cf" />
        <path d="M22 30v-8L4 8 .5 10.500V12z" fill="#0e6db5" />
      </svg>
    ),
    dot: true,
  },
];

function Taskbar() {
  return (
    <div className="flex h-[60px] items-center border-t border-[#aab0bb] bg-[linear-gradient(to_right,#dad7df_0px,#d6dbe8_80px,#d3dde8_700px,#d9dfec_1000px,#d9d5e0_1250px,#d8d6de_1450px,#d7dad8_1700px,#dad6da_1920px)]">
      <div className="flex h-full w-[575px] shrink-0 items-center bg-[linear-gradient(to_right,transparent_360px,#dbe6c8_420px,#dbe6c8_448px,transparent_505px)] pl-[27px]">
        <svg viewBox="0 0 26 26" className="mb-[3px] h-[26px] w-[26px]">
          <path d="M25 0c2 12-2 20-10 21.500C10 22.500 5 21 3 19l-1 6H0C0 14 1 5 10 2c5-1.500 10 0 15-2z" fill="#df6a1f" />
          <path d="M3 19C7 11 13 6 23 3" fill="none" stroke="#f7a467" strokeWidth="1" />
        </svg>
        <div className="ml-[11px] flex flex-col pb-[2px] text-[14px] leading-5 tracking-[-0.1px] whitespace-nowrap text-[#222]">
          <span>30°C</span>
          <span className="tracking-[0.15px] text-[#555]">Polluted air</span>
        </div>
      </div>
      <div className="flex h-full shrink-0 items-center">
        {apps.map((a, i) => (
          <div key={i} className="flex h-full w-[55px] items-center justify-center">
            <div
              className={
                "relative flex h-[50px] w-[48px] items-center justify-center " +
                (a.active ? "rounded-[5px] bg-[#eef1f7] shadow-sm" : "")
              }
            >
              {a.icon}
              {a.dot && <span className="absolute bottom-0 left-[20px] h-1 w-2 rounded-full bg-[#7d828b]" />}
              {a.active && <span className="absolute bottom-0 left-[14px] h-1 w-5 rounded-full bg-[#268193]" />}
            </div>
          </div>
        ))}
      </div>
      <div className="ml-auto flex shrink-0 items-center pr-[25px] pb-[2px] text-[14px] leading-5 text-[#222]">
        <svg viewBox="0 0 16 10" className="h-2.5 w-4" fill="none" stroke="#222" strokeWidth="1.600">
          <path d="M1 9l7-7 7 7" />
        </svg>
        <svg viewBox="0 0 22 18" className="ml-[12px] h-[18px] w-[22px]">
          <path d="M5 14a4.500 4.500 0 0 1-.5-9A6 6 0 0 1 15.500 4c3 .5 4.500 3 4 6l-4 4z" fill="#8d8d8d" stroke="#222" strokeWidth="1" />
          <circle cx="15.500" cy="12.500" r="5.500" fill="#fff" />
          <path d="M12.500 12a3 3 0 0 1 5.500-1.500M18.500 13a3 3 0 0 1-5.500 1.500" fill="none" stroke="#1b6ec2" strokeWidth="1.500" />
        </svg>
        <div className="ml-[17px] flex w-[29px] flex-col items-center whitespace-nowrap">
          <span>ENG</span>
          <span>IN</span>
        </div>
        <svg viewBox="0 0 20 18" className="ml-[22px] h-[17px] w-5" fill="none" stroke="#222" strokeWidth="1.500">
          <path d="M1 7a12.500 12.500 0 0 1 18 0M4 10a8.500 8.500 0 0 1 12 0M7 13a4.300 4.300 0 0 1 6 0" />
          <circle cx="10" cy="15.500" r="1.500" fill="#222" stroke="none" />
        </svg>
        <svg viewBox="0 0 22 18" className="ml-[9px] h-[17px] w-[21px]" fill="none" stroke="#222" strokeWidth="1.300">
          <path d="M1 6.500h3.500L10 2v14l-5.500-4.500H1z" strokeLinejoin="round" />
          <path d="M13 6.500c1 1.500 1 3.500 0 5M16 4.500c2 3 2 6 0 9M18.500 2.500c3 4 3 9 0 13" />
        </svg>
        <svg viewBox="0 0 20 18" className="ml-[9px] h-[17px] w-5">
          <rect x="1.700" y="5.700" width="15" height="10.600" rx="2" fill="none" stroke="#222" strokeWidth="1.400" />
          <rect x="3.500" y="7.500" width="11.500" height="7" fill="#222" />
          <path d="M17.500 9h2v4h-2z" fill="#222" />
          <path d="M6 0L0 7.500h3L1.500 12l6-6.500H5z" fill="#222" stroke="#dadada" strokeWidth=".8" />
        </svg>
        <div className="ml-[18px] flex w-[77px] flex-col items-end tracking-[-0.2px] whitespace-nowrap">
          <span>13:37</span>
          <span className="tracking-[0.1px]">15-10-2022</span>
        </div>
        <span className="ml-[9px] flex h-5 w-5 items-center justify-center rounded-full bg-[#1c6b78] text-[12px] text-white">7</span>
      </div>
    </div>
  );
}

export default function App() {
  return (
    <div className={"flex h-[1080px] w-[1920px] flex-col overflow-hidden bg-[#fcfcfe] " + UI}>
      <TabStrip />
      <Toolbar />
      <Bookmarks />
      <div className="flex h-[891px]">
        <div className="flex w-[1899px] flex-col">
          <Header />
          <div className="flex">
            <LeftNav />
            <ProfilePanel />
            <Main />
            <div className="mt-[10px] ml-5 flex h-[801px] w-[21px] shrink-0 flex-col items-center justify-between bg-[#f1f1f1] py-[6px]">
              <Tri dir="up" />
              <Tri dir="down" />
            </div>
            <div className="ml-[17px]">
              <RightRail />
            </div>
          </div>
        </div>
        <div className="flex w-[21px] flex-col items-center bg-[#f1f1f1] pt-[6px]">
          <Tri dir="up" />
          <div className="mt-[5px] h-[832px] w-[16px] bg-[#c1c1c1]" />
          <span className="mt-[22px] flex">
            <Tri dir="down" color="#505050" />
          </span>
        </div>
      </div>
      <Taskbar />
    </div>
  );
}
